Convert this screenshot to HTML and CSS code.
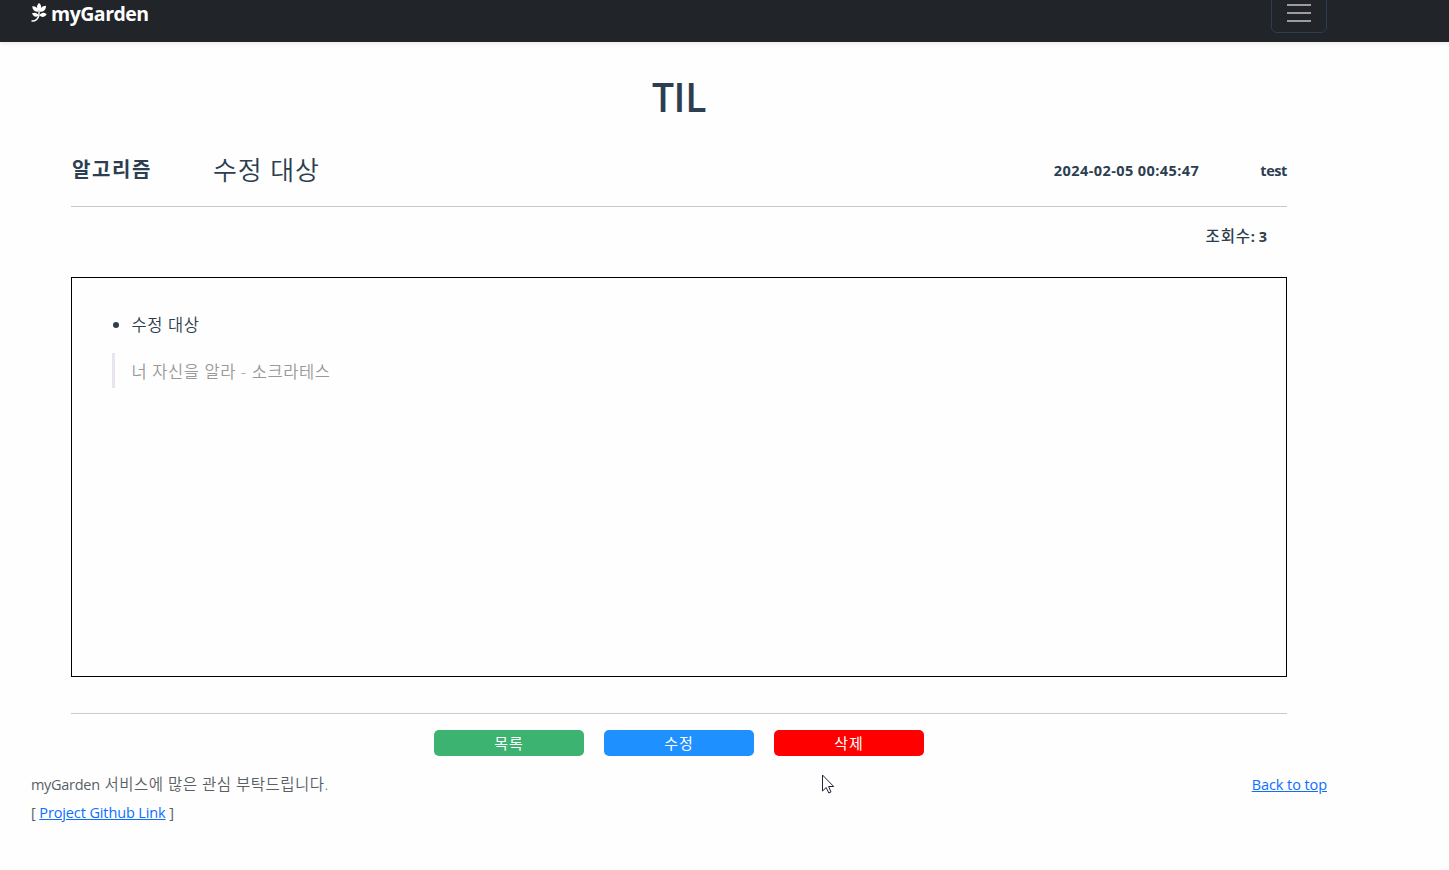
FILE: index.html
```html
<!DOCTYPE html>
<html lang="ko">
<head>
<meta charset="utf-8">
<title>myGarden</title>
<link rel="stylesheet" href="styles.css">
</head>
<body>
<header class="navbar">
  <div class="container navbar-inner">
    <a class="brand">
      <svg class="brand-icon" width="16" height="20" viewBox="0 0 16 20" fill="#fff"><path d="M8.200 0C10.700 2 10.800 4.800 8.600 7.500H7.600C5.400 4.800 5.500 2 8.200 0ZM1.300 3.300C5 3.300 7 5 7.500 8.800C3.600 8.800 1.500 7 1.300 3.300ZM15 2.700C15.100 6.600 13 8.800 8.900 8.800C9 5 11 2.900 15 2.700ZM1 10.200C4 9 6.500 9.900 7.700 12.500C5 14.800 2.300 13.600 1 10.200ZM15.700 11.200C13.500 14.400 11 14.700 8.400 12.500C10 9.500 12.900 9 15.700 11.200Z"/><path d="M8.200 5L7.900 12.500C7 16.200 4 18.200 .5 18" fill="none" stroke="#fff" stroke-width="1.400"/></svg>
      <span class="brand-name">myGarden</span>
    </a>
    <button class="toggler" aria-label="menu"><svg width="30" height="30" viewBox="0 0 30 30"><path d="M3 7h24M3 15h24M3 23h24" stroke="#a09b9f" stroke-width="2"/></svg></button>
  </div>
</header>
<main class="post">
  <h1 class="title">TIL</h1>
  <div class="post-head">
    <span class="category">알고리즘</span>
    <span class="subject">수정 대상</span>
    <span class="date">2024-02-05 00:45:47</span>
    <span class="writer">test</span>
  </div>
  <div class="views"><span class="views-label">조회수</span>: 3</div>
  <article class="content">
    <ul class="list"><li>수정 대상</li></ul>
    <blockquote class="quote">너 자신을 알라 - 소크라테스</blockquote>
  </article>
  <div class="actions">
    <button class="btn btn-list">목록</button>
    <button class="btn btn-edit">수정</button>
    <button class="btn btn-delete">삭제</button>
  </div>
</main>
<footer class="container footer">
  <div class="footer-text">
    <p class="line"><span class="service">myGarden</span> <span class="notice">서비스에 많은 관심 부탁드립니다.</span></p>
    <p class="line">[ <a class="link github" href="#">Project Github Link</a> ]</p>
  </div>
  <a class="link top" href="#">Back to top</a>
</footer>
<svg class="cursor" width="14" height="21" viewBox="0 0 14 21"><path d="M1.500 1V17L5.200 13.500L7.800 19L10 18L7.600 12.500H12.700Z" fill="#fff" stroke="#202533" stroke-width="1"/></svg>
</body>
</html>
```
FILE: styles.css
```css
* { box-sizing: border-box; }
body {
  margin: 0;
  height: 870px;
  overflow: hidden;
  background: #fefefe;
  color: #2c3e50;
  font-family: "Open Sans", "Noto Sans CJK KR", sans-serif;
  font-size: 16px;
}
.container { width: 1296px; margin-left: 31px; }
.navbar { height: 42px; background: #212529; box-shadow: 0 2px 4px rgba(0, 0, 0, .075); }
.navbar-inner { height: 42px; overflow: hidden; display: flex; justify-content: space-between; align-items: flex-end; padding-bottom: 9px; }
.brand { display: flex; gap: 4px; height: 30px; color: #fff; font-size: 19.5px; font-weight: 700; line-height: 22px; letter-spacing: -.5px; white-space: nowrap; }
.brand-icon { flex: none; }
.toggler { width: 56px; height: 40px; padding: 4px 12px; border: 1px solid #2c3e50; border-radius: 6px; background: none; }
.toggler svg { display: block; }
.post { width: 1216px; margin-left: 71px; }
.title { margin: 0; padding-top: 30px; height: 103px; font-size: 39px; line-height: 50px; font-weight: 600; letter-spacing: -.3px; text-align: center; }
.post-head { display: flex; align-items: center; height: 62px; padding-bottom: 12px; border-bottom: 1px solid #c4cad0; white-space: nowrap; line-height: 40px; }
.category { width: 142px; padding: 1px 0 0 1px; font-size: 20px; font-weight: 600; letter-spacing: 1.6px; }
.subject { font-size: 26px; font-weight: 350; letter-spacing: .9px; }
.date { margin-left: auto; padding-top: 2px; font-size: 14.500px; font-weight: 700; letter-spacing: .42px; }
.writer { margin-left: 61px; padding-top: 2px; font-size: 14.500px; font-weight: 700; letter-spacing: -.4px; }
.views { height: 70px; padding: 15px 20px 0 0; line-height: 26px; text-align: right; font-size: 14.500px; font-weight: 700; }
.views-label { font-family: "Noto Sans CJK KR", sans-serif; font-weight: 500; font-size: 15.5px; letter-spacing: .8px; }
.content { height: 400px; border: 1px solid #000; padding: 34px 40px; font-weight: 350; }
.list { margin: 0; padding-left: 19.5px; line-height: 25px; font-size: 16.5px; letter-spacing: .6px; }
.quote { margin: 16px 0 0; height: 35px; padding-left: 16.5px; border-left: 3px solid #eae4f0; color: #999; line-height: 37px; font-size: 16.5px; letter-spacing: .6px; }
.actions { margin-top: 36px; border-top: 1px solid #cbcbcb; padding-top: 16px; display: flex; justify-content: center; gap: 20px; }
.btn { width: 150px; height: 26px; padding: 0; border: 0; border-radius: 5px; color: #fff; font: 15px/26px "Noto Sans CJK KR", sans-serif; letter-spacing: 1px; }
.btn-list { background: #3cb371; }
.btn-edit { background: #1e90ff; }
.btn-delete { background: #f00; }
.footer { margin-top: 15px; display: flex; justify-content: space-between; color: #595f65; font-size: 14.500px; line-height: 28px; white-space: nowrap; }
.footer-text { margin-top: -1px; }
.line { margin: 0; letter-spacing: -.12px; }
.service { letter-spacing: -.3px; }
.notice { margin-left: 1px; font-size: 15.5px; font-weight: 350; letter-spacing: .5px; }
.link { color: #0d6efd; text-decoration: underline; }
.top { letter-spacing: -.08px; }
.cursor { position: absolute; left: 821px; top: 774px; }
```
